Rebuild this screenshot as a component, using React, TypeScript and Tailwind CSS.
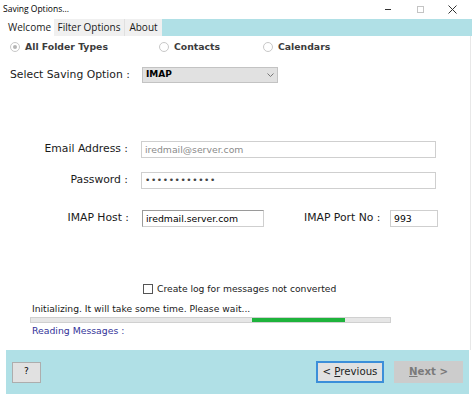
import React from "react";

const Radio = ({ checked }: { checked?: boolean }) => (
	<span className="relative inline-flex w-[10px] h-[10px] rounded-full border border-[#c8c8c8] bg-white items-center justify-center">
		{checked && <span className="w-[4px] h-[4px] rounded-full bg-[#b5b5b5]"></span>}
	</span>
);

const Field = ({ value, className, muted }: { value: string; className: string; muted?: boolean }) => (
	<div
		className={`h-[17px] flex items-center px-[3px] bg-white border border-[#cfcfcf] text-[9.3px] ${
			muted ? "text-[#8a8a8a]" : "text-black"
		} ${className}`}
	>
		{value}
	</div>
);

const App = () => {
	return (
		<div className="w-[474px] h-[399px] bg-white flex flex-col font-['DejaVu_Sans',sans-serif] text-[#1a1a1a] overflow-hidden">
			{/* title bar */}
			<div className="h-[19px] flex items-center justify-between pl-[3px]">
				<span className="text-[8.5px] text-black font-['Open_Sans',sans-serif]">Saving Options...</span>
				<div className="flex items-center h-full">
					<div className="w-[32px] flex justify-center">
						<span className="w-[6px] h-[1px] bg-[#333]"></span>
					</div>
					<div className="w-[32px] flex justify-center">
						<span className="w-[7px] h-[7px] border border-[#c4c4c4]"></span>
					</div>
					<div className="w-[32px] flex justify-center mr-[6px]">
						<svg width="9" height="9" viewBox="0 0 9 9">
							<path d="M0.5 0.5 L8.5 8.5 M8.5 0.5 L0.5 8.5" stroke="#333" strokeWidth="1" />
						</svg>
					</div>
				</div>
			</div>

			{/* tabs */}
			<div className="flex h-[17px] ml-[5px] mr-[2px] bg-[#b0e0e6]">
				<div className="w-[49px] bg-white flex items-center justify-center text-[10px] font-['Open_Sans',sans-serif]">
					Welcome
				</div>
				<div className="w-[70px] bg-[#f0f0f0] flex items-center justify-center text-[10px] font-['Open_Sans',sans-serif]">
					Filter Options
				</div>
				<div className="w-[38px] bg-[#f0f0f0] border-l border-[#e0e0e0] flex items-center justify-center text-[10px] font-['Open_Sans',sans-serif]">
					About
				</div>
			</div>

			{/* panel */}
			<div className="ml-[5px] mr-[3px] h-[314px] flex flex-col border-r border-[#e8e8e8]">
				<div className="mt-[4px] h-[14px] flex items-center text-[9.3px] font-bold text-[#3c3c3c]">
					<div className="w-[154px] flex items-center pl-[5px]">
						<Radio checked />
						<span className="ml-[5px]">All Folder Types</span>
					</div>
					<div className="w-[104px] flex items-center">
						<Radio />
						<span className="ml-[5px]">Contacts</span>
					</div>
					<div className="flex items-center">
						<Radio />
						<span className="ml-[5px]">Calendars</span>
					</div>
				</div>

				<div className="mt-[13px] h-[16px] flex items-center text-[10.8px]">
					<span className="w-[137px] pl-[5px]">Select Saving Option :</span>
					<div className="w-[136px] h-[16px] bg-[#e1e1e1] border border-[#c3c3c3] flex items-center justify-between px-[3px]">
						<span className="text-[9px] font-bold text-black">IMAP</span>
						<svg width="7" height="5" viewBox="0 0 7 5">
							<path d="M0.5 0.5 L3.5 3.5 L6.5 0.5" stroke="#777" fill="none" />
						</svg>
					</div>
				</div>

				<div className="mt-[58px] h-[17px] flex items-center text-[10.8px]">
					<span className="w-[123px] text-right">Email Address :</span>
					<Field value="iredmail@server.com" muted className="ml-[13px] w-[295px]" />
				</div>

				<div className="mt-[14px] h-[17px] flex items-center text-[10.8px]">
					<span className="w-[123px] text-right">Password :</span>
					<Field value="••••••••••••" className="ml-[13px] w-[295px] !text-[9px] tracking-[0.6px] !text-[#444]" />
				</div>

				<div className="mt-[21px] h-[17px] flex items-center text-[10.8px]">
					<span className="w-[124px] text-right">IMAP Host :</span>
					<Field value="iredmail.server.com" className="ml-[13px] w-[122px] border-t-[#9a9a9a] border-l-[#9a9a9a]" />
					<span className="ml-[40px] w-[82px] whitespace-nowrap">IMAP Port No :</span>
					<Field value="993" className="ml-[4px] w-[48px] border-[#a8a8a8]" />
				</div>

				<div className="mt-[55px] h-[14px] flex items-center text-[9.2px]">
					<span className="ml-[138px] w-[10px] h-[10px] border border-[#555] bg-white"></span>
					<span className="ml-[4px]">Create log for messages not converted</span>
				</div>

				<div className="mt-[6px] h-[14px] flex items-center text-[9.2px] pl-[27px]">
					Initializing. It will take some time. Please wait...
				</div>

				<div className="mt-[1px] ml-[25px] w-[361px] h-[6px] bg-[#e6e6e6] border border-[#d0d0d0] flex">
					<div className="ml-[221px] w-[93px] h-full bg-[#1eb33c]"></div>
				</div>

				<div className="mt-[2px] h-[12px] flex items-center pl-[27px] text-[9.3px] text-[#333399]">
					Reading Messages :
				</div>
			</div>

			{/* bottom bar */}
			<div className="ml-[6px] mr-[5px] h-[44px] bg-[#b0e0e6] flex items-center justify-between px-[6px]">
				<button className="w-[29px] h-[21px] bg-[#e1e1e1] border border-[#adadad] text-[9px] text-black">?</button>
				<div className="flex items-center gap-[10px]">
					<button className="w-[68px] h-[22px] bg-[#e1e1e1] border-2 border-[#3c8fd9] text-[10.2px] text-[#222]">
						&lt; <span className="underline">P</span>revious
					</button>
					<button className="w-[69px] h-[22px] bg-[#cccccc] text-[10.2px] text-[#7a7a7a] font-bold">
						<span className="underline">N</span>ext &gt;
					</button>
				</div>
			</div>
		</div>
	);
};

export default App;
